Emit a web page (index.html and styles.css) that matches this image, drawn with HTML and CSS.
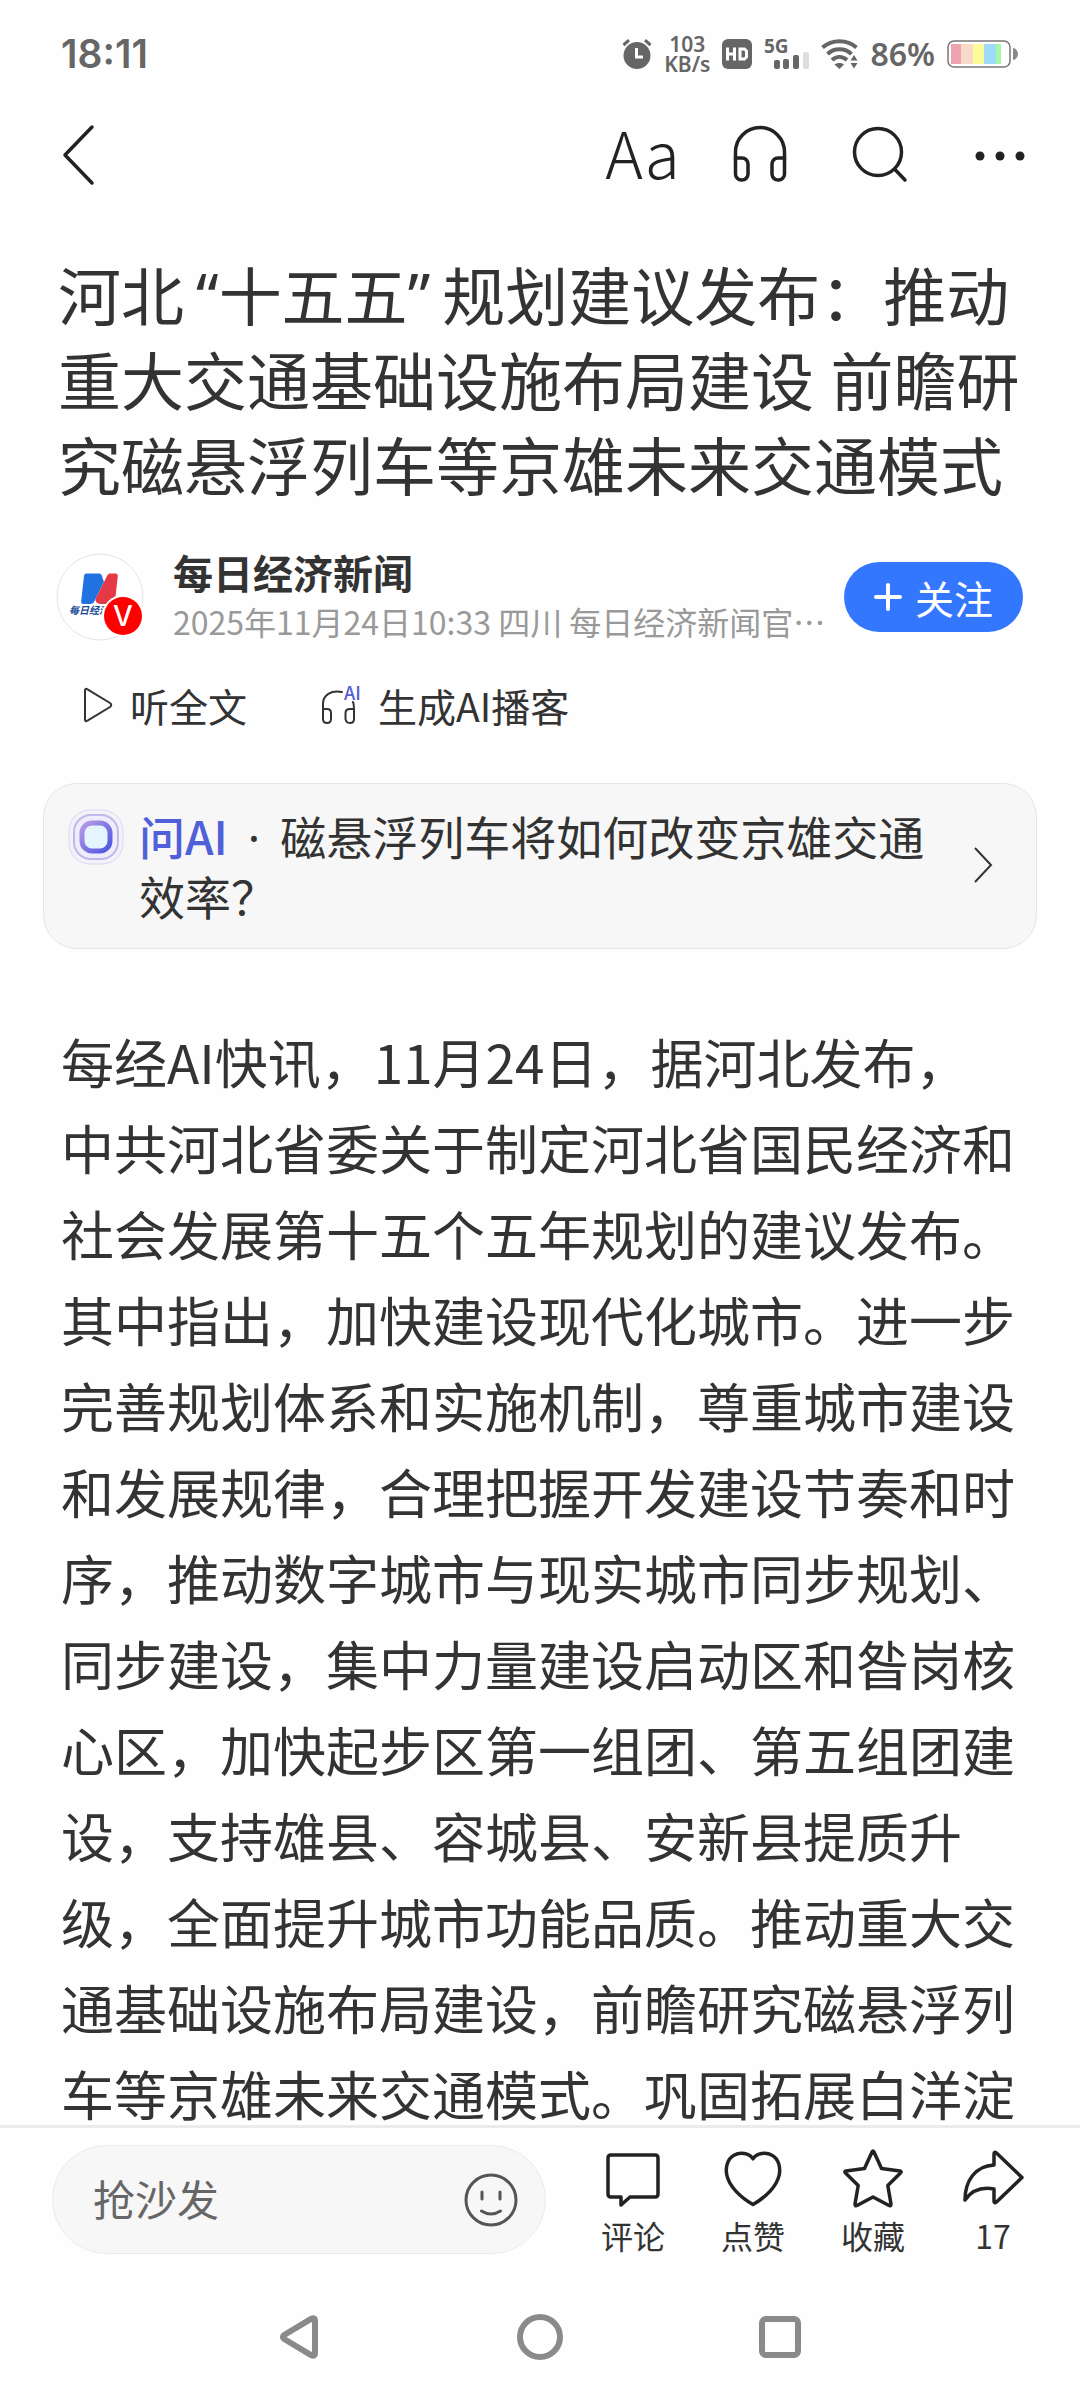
FILE: index.html
```html
<!DOCTYPE html>
<html lang="zh-CN">
<head>
    <meta charset="UTF-8">
    <meta name="viewport" content="width=device-width, initial-scale=1.0">
    <title>河北“十五五”规划建议发布</title>
    <link rel="stylesheet" href="styles.css">
</head>
<body>
    <div class="status">
        <span class="time">18:11</span>
        <div class="status-icons">
            <svg width="30" height="32" viewBox="0 0 30 32">
                <circle cx="15" cy="17.500" r="13.500" fill="#666"/>
                <path d="M1.500 7L7 2.200M28.500 7L23 2.200" stroke="#666" stroke-width="3"/>
                <path d="M14.500 10V19H21" fill="none" stroke="#fff" stroke-width="3"/>
            </svg>
            <span class="speed">103<br>KB/s</span>
            <svg width="30" height="30" viewBox="0 0 30 30">
                <rect width="30" height="30" rx="6" fill="#666"/>
                <path d="M5.500 8.500V21.500M12.500 8.500V21.500M5.500 15H12.500M18 10H22.500L24.500 12V18L22.500 20H18Z" fill="none" stroke="#fff" stroke-width="3"/>
            </svg>
            <svg width="45" height="32" viewBox="0 0 45 32">
                <text class="net" x="0" y="15">5G</text>
                <rect x="10" y="22" width="6" height="9" rx="2" fill="#666"/>
                <rect x="19" y="21" width="6" height="10" rx="2" fill="#666"/>
                <rect x="29" y="17" width="6" height="14" rx="2" fill="#666"/>
                <rect x="39" y="14" width="6" height="17" rx="2" fill="#ddd"/>
            </svg>
            <svg width="37" height="30" viewBox="0 0 37 30">
                <path d="M1.500 8.500C11 0 26 0 35.500 8.500M6.500 15C13 8.500 24 8.500 30.500 15M11 21C15.500 17 21.500 17 26 21" fill="none" stroke="#666" stroke-width="4"/>
                <path d="M13.500 25.500C16 23.500 21 23.500 23 25.500L18.500 30Z" fill="#666"/>
                <path d="M29.500 21.500L33 16 36.500 21.500ZM29.500 24L33 29.500 36.500 24Z" fill="#666"/>
            </svg>
            <span class="percent">86%</span>
            <svg width="72" height="28" viewBox="0 0 72 28">
                <rect x="1" y="1" width="62" height="26" rx="6" fill="#fff" stroke="#777" stroke-width="1.500"/>
                <path d="M4 4H14V24H4Z" fill="#eda4b0"/>
                <path d="M14 4H26V24H14Z" fill="#f9d9ca"/>
                <path d="M26 4H37V24H26Z" fill="#fbfb9c"/>
                <path d="M37 4H49V24H37Z" fill="#a0dcfa"/>
                <path d="M49 4H54V24H49Z" fill="#a5f9a8"/>
                <path d="M66 8C69 8 71 12 71 14S69 20 66 20Z" fill="#888"/>
            </svg>
        </div>
    </div>

    <header class="toolbar">
        <button class="back" aria-label="返回">
            <svg width="34" height="62" viewBox="0 0 34 62"><path d="M32 3L5 31L32 59"/></svg>
        </button>
        <button class="tool font-size" aria-label="字体大小">Aa</button>
        <button class="tool" aria-label="收听">
            <svg width="62" height="60" viewBox="0 0 62 60">
                <path d="M4.500 34V27A24.500 24.500 0 0 1 53.500 27V34"/>
                <path d="M4.500 33H11A6 6 0 0 1 17 39V49A6 6 0 0 1 11 55H10.500A6 6 0 0 1 4.500 49ZM53.500 33H47A6 6 0 0 0 41 39V49A6 6 0 0 0 47 55H47.500A6 6 0 0 0 53.500 49Z"/>
            </svg>
        </button>
        <button class="tool" aria-label="搜索">
            <svg width="60" height="60" viewBox="0 0 60 60">
                <circle cx="27" cy="27" r="23.500"/>
                <path d="M43.500 44L54 55"/>
            </svg>
        </button>
        <button class="tool" aria-label="更多">
            <svg class="dots" width="50" height="60" viewBox="0 0 50 60">
                <circle cx="5" cy="31" r="4.500"/><circle cx="25" cy="31" r="4.500"/><circle cx="45" cy="31" r="4.500"/>
            </svg>
        </button>
    </header>

    <main class="article">
        <h1 class="title">河北<span class="quote-open">“</span>十五五<span class="quote-close">”</span>规划建议发布：推动重大交通基础设施布局建设 前瞻研究磁悬浮列车等京雄未来交通模式</h1>

        <div class="author">
            <svg class="avatar" width="88" height="88" viewBox="0 0 88 88">
                <circle cx="44" cy="44" r="43" fill="#fff" stroke="#e4e4e4" stroke-width="1"/>
                <path d="M30 20.500H43Q46 20.500 46.500 25L48 29 38 49Q37 51 34 51H27Q25 51 25.200 48L28 23Q28.200 20.500 30 20.500Z" fill="#1f72e0"/>
                <path d="M54 20.500H60Q62 20.500 61.800 23L59 48Q58.500 51 56 51H44Q39 50 39.500 46L51 23Q52 20.500 54 20.500Z" fill="#e63946"/>
                <text class="logo-name" x="13" y="61">每日经济</text>
                <circle cx="67" cy="63" r="21" fill="#fff"/>
                <circle cx="67" cy="63" r="19" fill="#fe0000"/>
                <text class="logo-v" x="67" y="73">V</text>
            </svg>
            <div class="author-info">
                <a class="name" href="#">每日经济新闻</a>
                <p class="meta">2025年11月24日10:33 四川 每日经济新闻官…</p>
            </div>
            <button class="follow">
                <svg width="28" height="28" viewBox="0 0 28 28"><path d="M14 2V26M2 14H26"/></svg>
                关注
            </button>
        </div>

        <div class="listen">
            <button class="listen-btn">
                <svg width="31" height="38" viewBox="0 0 31 38"><path d="M3 4.500Q3 2 5.500 3.300L28 17Q30.500 19 28 21L5.500 34.700Q3 36 3 33.500Z"/></svg>
                听全文
            </button>
            <button class="listen-btn">
                <svg width="40" height="42" viewBox="0 0 40 42">
                    <path d="M2 28V20C2 11 10 6 21 8M2 25H6Q10 25 10 29V35Q10 39 6 39T2 35V25M32 18Q33 20 33 25V35Q33 39 29 39T24.500 35V29Q24.500 25 29 25H33"/>
                    <text class="ai-mark" x="23" y="16">AI</text>
                </svg>
                生成AI播客
            </button>
        </div>

        <a class="ask" href="#">
            <svg class="ask-logo" width="56" height="56" viewBox="0 0 56 56">
                <defs>
                    <linearGradient id="ring" x1="0" y1="0" x2="1" y2="1">
                        <stop offset="0" stop-color="#b99be6"/>
                        <stop offset="1" stop-color="#4a55e0"/>
                    </linearGradient>
                </defs>
                <rect x="1" y="1" width="54" height="54" rx="21" fill="#f3f1fb" stroke="#dcd7f0"/>
                <rect x="6" y="6" width="44" height="44" rx="17" fill="#efedfb" stroke="#c3b9e8" stroke-width="2"/>
                <rect x="14" y="14" width="28" height="28" rx="10" fill="#e4f5ff" stroke="url(#ring)" stroke-width="5"/>
            </svg>
            <p class="ask-text"><span class="ask-ai">问AI</span><span class="ask-dot">·</span>磁悬浮列车将如何改变京雄交通效率？</p>
            <svg class="arrow" width="20" height="38" viewBox="0 0 20 38"><path d="M2 2L18 19L2 36"/></svg>
        </a>

        <p class="content">每经AI快讯，11月24日，据河北发布，中共河北省委关于制定河北省国民经济和社会发展第十五个五年规划的建议发布。其中指出，加快建设现代化城市。进一步完善规划体系和实施机制，尊重城市建设和发展规律，合理把握开发建设节奏和时序，推动数字城市与现实城市同步规划、同步建设，集中力量建设启动区和昝岗核心区，加快起步区第一组团、第五组团建设，支持雄县、容城县、安新县提质升级，全面提升城市功能品质。推动重大交通基础设施布局建设，前瞻研究磁悬浮列车等京雄未来交通模式。巩固拓展白洋淀</p>
    </main>

    <footer class="bottom">
        <div class="comment-box">
            <input class="comment-input" type="text" placeholder="抢沙发" aria-label="发表评论">
            <button class="emoji" aria-label="表情">
                <svg width="54" height="54" viewBox="0 0 54 54">
                    <circle cx="27" cy="27" r="25"/>
                    <path d="M18 19V26M36 19V26M17.500 38Q27 44 36.500 38"/>
                </svg>
            </button>
        </div>
        <button class="action">
            <svg width="60" height="60" viewBox="0 0 60 60"><path d="M8 6H52Q55 6 55 9V45Q55 48 52 48H27L18 56V48H8Q5 48 5 45V9Q5 6 8 6Z"/></svg>
            评论
        </button>
        <button class="action">
            <svg width="60" height="60" viewBox="0 0 60 60"><path d="M30 9.800C26 4 17 2.800 11 6.300C4.500 10 2.200 18 3.800 26C6 37 17 48 30 55.500C43 48 54 37 56.200 26C57.800 18 55.500 10 49 6.300C43 2.800 34 4 30 9.800Z"/></svg>
            点赞
        </button>
        <button class="action">
            <svg width="60" height="60" viewBox="0 0 60 60"><path d="M29 3Q30 1 31 3L38.500 19.500L57 22Q59 22.500 57.500 24L44.800 36.500L48 55Q48 57.500 46 56.500L30 48L14 56.500Q12 57.500 12 55L15.200 36.500L2.500 24Q1 22.500 3 22L21.500 19.500Z"/></svg>
            收藏
        </button>
        <button class="action">
            <svg width="60" height="60" viewBox="0 0 60 60"><path d="M31 16V5Q31 2 33.500 4L59 28.500L33.500 53Q31 55 31 52V40C20 38 9 41 2 51C2 32 12 17 31 16Z"/></svg>
            17
        </button>
    </footer>

    <nav class="sysnav">
        <button aria-label="后退">
            <svg width="48" height="48" viewBox="0 0 48 48"><path d="M9 21.500L35 6Q39 4 39 8V40Q39 44 35 42L9 26.500Q5 24 9 21.500Z"/></svg>
        </button>
        <button aria-label="主页">
            <svg width="48" height="48" viewBox="0 0 48 48"><circle cx="24" cy="24" r="20"/></svg>
        </button>
        <button aria-label="最近任务">
            <svg width="48" height="48" viewBox="0 0 48 48"><rect x="6" y="6" width="36" height="36" rx="4"/></svg>
        </button>
    </nav>
</body>
</html>
```

FILE: styles.css
```css
* {
    margin: 0;
    padding: 0;
    box-sizing: border-box;
}
body {
    display: flex;
    flex-direction: column;
    height: 100vh;
    background: #fefefe;
    color: #333;
    font-family: "Noto Sans CJK SC", "Noto Sans", sans-serif;
}
button {
    border: none;
    background: none;
    color: inherit;
    font-family: inherit;
    cursor: pointer;
}
a {
    color: inherit;
    text-decoration: none;
}
svg {
    flex: none;
    display: block;
    overflow: visible;
}

/* 状态栏 */
.status {
    flex: none;
    display: flex;
    justify-content: space-between;
    align-items: center;
    height: 108px;
    padding: 0 61px;
    color: #666;
}
.time {
    font: 600 39px/40px Inter, sans-serif;
}
.status-icons {
    display: flex;
    align-items: center;
    gap: 12px;
}
.speed {
    font: 600 21px/20px "Noto Sans", sans-serif;
    text-align: center;
}
.net {
    font: 700 19px "Noto Sans", sans-serif;
    fill: #666;
}
.percent {
    font: 600 32px/40px "Noto Sans", sans-serif;
}

/* 顶部工具栏 */
.toolbar {
    flex: none;
    display: flex;
    align-items: center;
    height: 94px;
    padding: 0 21px 0 60px;
}
.toolbar svg {
    fill: none;
    stroke: #222;
    stroke-width: 3.5;
    stroke-linecap: round;
    stroke-linejoin: round;
}
.toolbar .dots {
    fill: #222;
    stroke: none;
}
.back {
    margin-right: auto;
}
.tool {
    display: flex;
    justify-content: center;
    align-items: center;
    width: 119px;
    height: 94px;
}
.font-size {
    padding-bottom: 8px;
    color: #222;
    font-size: 64px;
    font-weight: 300;
    line-height: 86px;
}

/* 正文 */
.article {
    flex: 1;
    min-height: 0;
    padding-top: 51px;
    overflow: hidden;
}
.title {
    padding: 0 58px;
    font: 400 63px/85px "Noto Sans", "Noto Sans CJK SC", sans-serif;
}
.quote-open {
    margin-left: 12px;
}
.quote-close {
    margin-right: 12px;
}
.author {
    display: flex;
    align-items: center;
    margin-top: 40px;
    padding: 0 57px 0 56px;
}
.author-info {
    flex: 1;
    min-width: 0;
    margin-left: 29px;
}
.name {
    display: block;
    font-size: 40px;
    font-weight: 700;
    line-height: 49px;
}
.meta {
    color: #999;
    font-size: 32px;
    line-height: 49px;
    white-space: nowrap;
    overflow: hidden;
}
.follow {
    display: flex;
    justify-content: center;
    align-items: center;
    gap: 13px;
    width: 179px;
    height: 70px;
    border-radius: 35px;
    background: #3377ff;
    color: #fff;
    font-size: 39px;
    line-height: 64px;
}
.follow svg {
    fill: none;
    stroke: #fff;
    stroke-width: 4;
    stroke-linecap: round;
}
.logo-name {
    font: italic 700 10px "Noto Sans CJK SC", sans-serif;
    fill: #1c4a94;
}
.logo-v {
    font: 500 28px Inter, sans-serif;
    fill: #fff;
    text-anchor: middle;
}
.listen {
    display: flex;
    gap: 74px;
    margin-top: 31px;
    padding: 0 82px;
}
.listen-btn {
    display: flex;
    align-items: center;
    gap: 17px;
    font-size: 39px;
    line-height: 56px;
}
.listen-btn svg {
    fill: none;
    stroke: #333;
    stroke-width: 2;
    stroke-linecap: round;
    stroke-linejoin: round;
}
.listen-btn .ai-mark {
    font: 500 18px "Noto Sans CJK SC", sans-serif;
    fill: #5560d0;
    stroke: none;
}
.ask {
    display: flex;
    align-items: center;
    margin: 50px 43px 0;
    padding: 21px 43px 23px 24px;
    border: 1px solid #e5e5e5;
    border-radius: 34px;
    background: #f7f7f7;
}
.ask-logo {
    align-self: flex-start;
    margin: 4px 15px 0 0;
}
.ask-text {
    flex: 1;
    padding-right: 24px;
    font-size: 46px;
    line-height: 60px;
}
.ask-ai {
    color: #5060d8;
    font-weight: 500;
}
.ask-dot {
    margin: 0 20px;
    font-family: "Noto Sans", sans-serif;
    line-height: 1;
}
.arrow {
    fill: none;
    stroke: #333;
    stroke-width: 2;
}
.content {
    margin-top: 69px;
    padding: 0 62px 0 61px;
    font-size: 53px;
    line-height: 86px;
}

/* 底部操作栏 */
.bottom {
    flex: none;
    display: flex;
    align-items: center;
    height: 148px;
    padding: 0 27px 2px 52px;
    border-top: 3px solid #ebebeb;
    background: #fefefe;
}
.comment-box {
    flex: 1;
    min-width: 0;
    display: flex;
    align-items: center;
    height: 109px;
    margin-right: 27px;
    padding: 0 27px 0 40px;
    border: 1px solid #ebebeb;
    border-radius: 55px;
    background: #f7f7f7;
}
.comment-input {
    flex: 1;
    min-width: 0;
    padding-bottom: 4px;
    border: none;
    outline: none;
    background: none;
    font: 400 42px/60px "Noto Sans CJK SC", sans-serif;
}
.comment-input::placeholder {
    color: #666;
    opacity: 1;
}
.emoji svg {
    fill: none;
    stroke: #555;
    stroke-width: 3;
    stroke-linecap: round;
}
.action {
    display: flex;
    flex-direction: column;
    align-items: center;
    width: 120px;
    padding-top: 8px;
    font-size: 32px;
    line-height: 48px;
}
.action svg {
    margin-bottom: 2px;
    fill: none;
    stroke: #222;
    stroke-width: 3.5;
    stroke-linejoin: round;
}
.sysnav {
    flex: none;
    display: flex;
    justify-content: center;
    align-items: center;
    gap: 192px;
    height: 127px;
}
.sysnav svg {
    fill: none;
    stroke: #8a8a8a;
    stroke-width: 6;
}
```
